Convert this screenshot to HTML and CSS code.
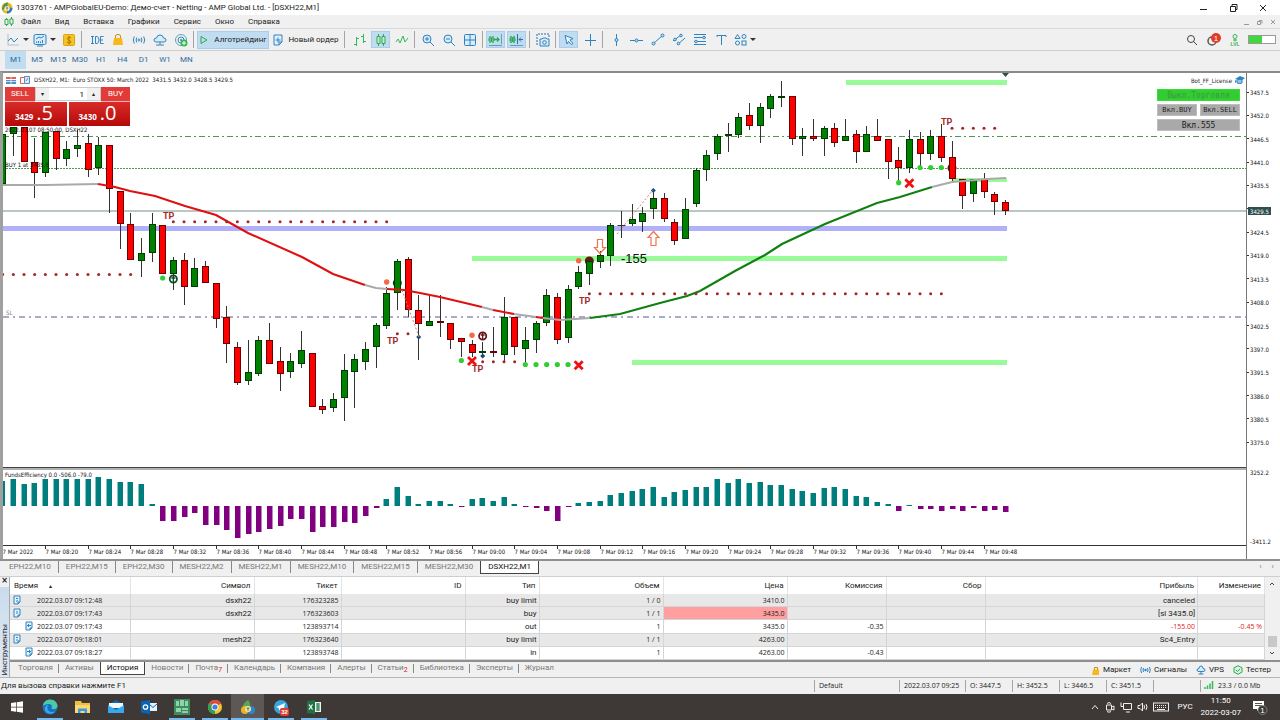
FILE: index.html
```html
<!DOCTYPE html>
<html lang="ru">
<head>
<meta charset="utf-8">
<title>1303761 - AMPGlobalEU-Demo</title>
<link rel="stylesheet" href="styles.css">
</head>
<body>
<header class="titlebar">
  <svg class="app-logo" width="12" height="12" viewBox="0 0 12 12"><circle cx="6" cy="6" r="5.5" fill="#e9b824"/><path d="M1 8C1 3 4 .5 7 .6L6 6z" fill="#4a9a4c"/><path d="M6 11.500A5.500 5.500 0 0 0 11.500 6L6 5z" fill="#2c7fc4"/><circle cx="6" cy="6.500" r="2.600" fill="#fff4c2"/><path d="M6 4.500v4M4.800 6h2.400" stroke="#866" stroke-width=".8"/></svg>
  <h1>1303761 - AMPGlobalEU-Demo: Демо-счет - Netting - AMP Global Ltd. - [DSXH22,M1]</h1>
  <div class="winctl">
    <button aria-label="Свернуть"><svg width="10" height="10"><path d="M2 6.500h7" stroke="#222"/></svg></button>
    <button aria-label="Развернуть"><svg width="10" height="10"><path d="M2.500 3.500h5v5h-5zM4 3V1.500h5v5H8" fill="none" stroke="#222"/></svg></button>
    <button aria-label="Закрыть"><svg width="10" height="10"><path d="M2 2l6 6M8 2l-6 6" stroke="#222"/></svg></button>
  </div>
</header>
<nav class="menubar">
  <svg width="10" height="10"><path d="M2.500 1v8M7.500 0v9" stroke="#2cab4f"/><path d="M1 2.500h3v5H1zM6 2h3v5H6z" fill="#f0f0f0" stroke="#2cab4f"/></svg>
  <button>Файл</button><button>Вид</button><button>Вставка</button><button>Графики</button><button>Сервис</button><button>Окно</button><button>Справка</button>
  <div class="mdictl">
    <svg width="8" height="8"><path d="M1 6.500h5" stroke="#999"/></svg>
    <svg width="8" height="8"><path d="M1.500 3.500h3v3h-3zM3 2.500h3v3" fill="none" stroke="#999"/></svg>
    <svg width="8" height="8"><path d="M2 2l4 4M6 2l-4 4" stroke="#999"/></svg>
  </div>
</nav>
<div class="toolbar">
  <button class="ib drop" aria-label="Новый график"><svg width="14" height="14"><path d="M2 1v11h11" fill="none" stroke="#a9bfd0"/><path d="M2 8l3-3 3 4 4-4" fill="none" stroke="#2f83c0"/></svg></button>
  <button class="ib drop" aria-label="Шаблоны"><svg width="14" height="14"><rect x="1" y="1.500" width="12" height="10" rx="1.500" fill="#d8ebf8" stroke="#2f83c0"/><path d="M3 6l3-2 2 1 3-2M3.500 10V8.500M5.500 10V8M7.500 10V8.500M9.500 10V7" fill="none" stroke="#2f83c0"/><path d="M4 13h6" stroke="#2f83c0"/></svg></button>
  <button class="ib" aria-label="Символы"><svg width="12" height="12"><rect x=".5" y=".5" width="11" height="11" rx="1" fill="#f7c324" stroke="#dba512"/><path d="M8 4C6 2.500 4 3.500 4.500 5S8 6.500 8 8 5.500 9.500 4 8M6 2v8.500" fill="none" stroke="#946a00" stroke-width=".8"/></svg></button>
  <i class="sep"></i><i class="pad"></i>
  <button class="ib" aria-label="IDE"><svg width="14" height="12"><path d="M1 2.500h3M2.500 2.500v7M1 9.500h3M5.500 2.500v7h1.500q2-.5 2-3.500t-2-3.500zM13.500 2.500h-3v7h3M10.500 6h2.500" fill="none" stroke="#2f83c0"/></svg></button>
  <button class="ib" aria-label="Маркет"><svg width="12" height="13"><path d="M3.500 6V3q0-1.500 2.500-1.500T8.500 3v3" fill="none" stroke="#c98e10"/><path d="M2 5h8l1 7H1z" fill="#f7b81e"/></svg></button>
  <button class="ib" aria-label="Сигналы"><svg width="14" height="12"><circle cx="7" cy="6" r="1" fill="none" stroke="#2f83c0"/><path d="M4.800 3.500q-1.500 2.500 0 5M9.200 3.500q1.500 2.500 0 5M2.300 2.500q-2 3.500 0 7M11.700 2.500q2 3.500 0 7" fill="none" stroke="#2f83c0"/></svg></button>
  <button class="ib" aria-label="VPS"><svg width="14" height="14"><path d="M4 9H3Q1 9 1 7t2.500-2Q4 2 7 2t3.500 3Q13 5 13 7t-2 2H4M7 9v3M3 12h8" fill="#d8ebf8" stroke="#2f83c0"/></svg></button>
  <button class="ib" aria-label="Сеть"><svg width="14" height="14"><circle cx="7" cy="7" r="5.500" fill="none" stroke="#5aa7b8"/><circle cx="7" cy="7" r="3" fill="none" stroke="#2f83c0"/><circle cx="7" cy="7" r="1" fill="#2f83c0"/><circle cx="10" cy="10" r="3.500" fill="#35b855"/><path d="M10 8v4M8 10h4" stroke="#fff"/></svg></button>
  <i class="sep"></i>
  <button class="wide on algo"><svg width="10" height="10"><path d="M2 1.500l6 3.500-6 3.500z" fill="none" stroke="#2cab4f"/></svg>Алготрейдинг</button>
  <button class="wide neworder"><svg width="10" height="12"><path d="M1 1h8v7l-3 3H1z" fill="#e4f1fa" stroke="#2f83c0"/><path d="M5 3.500v5M2.500 6h5M9 8H6v3" fill="none" stroke="#2f83c0"/></svg>Новый ордер</button>
  <i class="sep"></i><i class="pad"></i>
  <button class="ib" aria-label="Бары"><svg width="14" height="12"><path d="M3.500 3v9M1 10.500h2.500M3.500 4.500H6M10.500 0v9M8 2.500h2.500M10.500 7.500H13" stroke="#35b855"/></svg></button>
  <button class="ib on" aria-label="Свечи"><svg width="12" height="12"><path d="M3.500 0v12M8.500 0v12" stroke="#2cab4f"/><path d="M2 2.500h3v7H2zM7 2.500h3v7H7z" fill="#cfe6da" stroke="#2cab4f"/></svg></button>
  <button class="ib" aria-label="Линия"><svg width="14" height="12"><path d="M1 8l2-3 2 4 3-7 2 6 3-4" fill="none" stroke="#35b855"/></svg></button>
  <i class="sep"></i>
  <button class="ib" aria-label="Приблизить"><svg width="14" height="14"><circle cx="6" cy="6" r="4" fill="#d8ebf8" stroke="#2f83c0"/><path d="M9 9l4 4M4 6h4M6 4v4" stroke="#2f83c0"/></svg></button>
  <button class="ib" aria-label="Отдалить"><svg width="14" height="14"><circle cx="6" cy="6" r="4" fill="#d8ebf8" stroke="#2f83c0"/><path d="M9 9l4 4M4 6h4" stroke="#2f83c0"/></svg></button>
  <button class="ib" aria-label="Плитка"><svg width="12" height="12"><rect x=".5" y=".5" width="11" height="11" rx="1" fill="#d8ebf8" stroke="#2f83c0"/><path d="M6 1v10M1 6h10" stroke="#2f83c0"/></svg></button>
  <i class="sep"></i>
  <button class="ib on" aria-label="Автопрокрутка"><svg width="15" height="14"><path d="M2 3v7M5 3v7M6 6.500h5M9 4.500l2 2-2 2" fill="none" stroke="#2cab4f" stroke-width="1.300"/><path d="M1 5v3M3.500 4v5M6 5v3" stroke="#2cab4f"/><path d="M13.500 1v10M1 12.500h13" stroke="#6d9cbb"/></svg></button>
  <button class="ib on" aria-label="Сдвиг графика"><svg width="15" height="14"><path d="M2 3v7M5 3v7" stroke="#2cab4f" stroke-width="1.500"/><path d="M1 5v3M3.500 4v5M6 5v3" stroke="#2cab4f"/><path d="M8.500 1v10M14 6.500h-4M12 4.500l-2 2 2 2" fill="none" stroke="#2f70a8"/><path d="M1 12.500h13" stroke="#6d9cbb"/></svg></button>
  <i class="sep"></i>
  <button class="ib" aria-label="Снимок"><svg width="14" height="14"><path d="M1 12V1h12v4" fill="none" stroke="#2f70a8" stroke-dasharray="2 1"/><path d="M4 6h2l1-1h3l1 1h2v7H4z" fill="#d8ebf8" stroke="#2f83c0"/><circle cx="8.500" cy="9.500" r="1.800" fill="none" stroke="#2f83c0"/></svg></button>
  <i class="sep grip"></i>
  <button class="ib on" aria-label="Курсор"><svg width="12" height="12"><path d="M2 1.500l8 3-3 1.500 3 3.500-1.500 1.200L5.500 7.500 4 10z" fill="#e8f3fb" stroke="#2f83c0"/></svg></button>
  <button class="ib" aria-label="Перекрестие"><svg width="12" height="12"><path d="M6.500 0v12M1 6.500h11" stroke="#2f83c0"/></svg></button>
  <i class="sep"></i>
  <button class="ib" aria-label="Вертикальная линия"><svg width="12" height="12"><path d="M6.500 0v12" stroke="#2f83c0"/><circle cx="6.500" cy="6" r="1.500" fill="#bcdcf2" stroke="#2f83c0"/></svg></button>
  <button class="ib" aria-label="Горизонтальная линия"><svg width="13" height="12"><path d="M0 6.500h13" stroke="#2f83c0"/><circle cx="6.500" cy="6.500" r="1.500" fill="#bcdcf2" stroke="#2f83c0"/></svg></button>
  <button class="ib" aria-label="Трендовая линия"><svg width="14" height="13"><path d="M2 11L12 2" stroke="#2f83c0"/><circle cx="2.500" cy="10.500" r="1.500" fill="#bcdcf2" stroke="#2f83c0"/><circle cx="11.500" cy="2.500" r="1.500" fill="#bcdcf2" stroke="#2f83c0"/></svg></button>
  <button class="ib" aria-label="Канал"><svg width="14" height="13"><path d="M1 8l8-6M5 12l8-7" stroke="#2f83c0"/><circle cx="3" cy="6.500" r="1.300" fill="#bcdcf2" stroke="#2f83c0"/><circle cx="9" cy="2.500" r="1.300" fill="#bcdcf2" stroke="#2f83c0"/><circle cx="6.500" cy="10.500" r="1.300" fill="#bcdcf2" stroke="#2f83c0"/></svg></button>
  <button class="ib" aria-label="Фибоначчи"><svg width="14" height="13"><path d="M1 1.500h12M1 4.500h12M1 8.500h12M1 11.500h12" stroke="#2f83c0"/><circle cx="11" cy="4.500" r="1.300" fill="#bcdcf2" stroke="#2f83c0"/><circle cx="3" cy="8.500" r="1.300" fill="#bcdcf2" stroke="#2f83c0"/></svg></button>
  <button class="ib" aria-label="Текст"><svg width="12" height="12"><path d="M2 3V1.500h9V3M6.500 1.500V11" fill="none" stroke="#2f83c0"/></svg></button>
  <button class="ib drop" aria-label="Объекты"><svg width="13" height="13"><path d="M3.500 1.500l2.500 4H1z" fill="none" stroke="#2f83c0"/><circle cx="10" cy="3.500" r="2" fill="none" stroke="#2f83c0"/><circle cx="3.500" cy="10" r="2" fill="none" stroke="#2f83c0"/><rect x="8" y="8" width="4" height="4" fill="none" stroke="#2f83c0"/></svg></button>
  <div class="tbright">
    <button aria-label="Поиск"><svg width="12" height="12"><circle cx="5" cy="5" r="3.500" fill="none" stroke="#444"/><path d="M7.500 7.500L11 11" stroke="#444"/></svg></button>
    <button aria-label="Уведомления"><svg width="16" height="14"><circle cx="6" cy="8" r="4" fill="none" stroke="#555" stroke-width="1.500"/><circle cx="10" cy="5" r="5" fill="#e33b25"/><text x="10" y="8" class="badge" text-anchor="middle">1</text></svg></button>
    <button aria-label="Уровень"><svg width="10" height="14"><circle cx="5" cy="3.500" r="2" fill="none" stroke="#35b855"/><path d="M5 5.500v3M3 7h4" stroke="#35b855"/><text x="5" y="13" class="lvl" text-anchor="middle">LVL</text></svg></button>
    <span class="meter"><span></span></span>
  </div>
</div>
<div class="framebar"><div class="frames">
  <button class="on">M1</button><button>M5</button><button>M15</button><button>M30</button><button>H1</button><button>H4</button><button>D1</button><button>W1</button><button>MN</button>
</div></div>

<main class="chart">
  <div class="plot">
    <svg id="plot" width="100%" height="100%" role="img" aria-label="График DSXH22, M1"></svg>
    <div class="chart-title">
      <svg width="10" height="9"><path d="M0 1h10v2H0z" fill="#e06050"/><path d="M0 4h10v4H0z" fill="#4f8fc8"/><path d="M5 0v9M0 5.500h10" stroke="#fff" stroke-width=".7"/></svg>
      <svg width="10" height="9"><path d="M.5 1.500h4v6h-4z" fill="#fff" stroke="#e06050"/><path d="M4.500 .5h5v7h-5z" fill="#d8ebf8" stroke="#4f8fc8"/><path d="M6 5l2-3" stroke="#e06050"/></svg>
      <span>DSXH22, M1:&nbsp; Euro STOXX 50: March 2022&nbsp; 3431.5 3432.0 3428.5 3429.5</span>
    </div>
    <form class="oneclick">
      <button type="button" class="side">SELL</button>
      <div class="volume"><button type="button" aria-label="Меньше">▾</button><input value="1" aria-label="Объем"><button type="button" aria-label="Больше">▴</button></div>
      <button type="button" class="side">BUY</button>
      <div class="quotes"><button type="button"><small>3429</small> .<b>5</b></button><button type="button"><small>3430</small> .<b>0</b></button></div>
    </form>
    <div class="bot">
      <div class="botname">Bot_FF_License <svg width="10" height="8"><path d="M0 3l5-3 5 2-4 3z" fill="#2f83c0"/><path d="M2 4v3q3 1 5 0V4M1 4l-1 3" fill="#8cc4ea" stroke="#2f83c0"/></svg></div>
      <button class="go">Выкл.Торговля</button>
      <button class="half">Вкл.BUY</button><button class="half">Вкл.SELL</button>
      <button class="long">Вкл.555</button>
    </div>
  </div>
  <svg id="axis" width="33" height="100%" role="img" aria-label="Шкала цен"></svg>
</main>

<nav class="charttabs">
  <button>EPH22,M10</button><button>EPH22,M15</button><button>EPH22,M30</button><button>MESH22,M2</button><button>MESH22,M1</button><button>MESH22,M10</button><button>MESH22,M15</button><button>MESH22,M30</button><button class="on">DSXH22,M1</button>
  <span class="arrows"><span>‹</span><span>›</span></span>
</nav>

<section class="toolbox">
  <aside><button aria-label="Закрыть панель">×</button><span>Инструменты</span></aside>
  <div class="tbmain">
    <div class="history">
      <table>
        <colgroup><col class="c1"><col class="c2"><col class="c3"><col class="c2"><col class="c4"><col class="c2"><col class="c2"><col class="c5"><col class="c5"><col><col class="c6"></colgroup>
        <thead><tr><th class="first">Время <i>▴</i></th><th>Символ</th><th>Тикет</th><th>ID</th><th>Тип</th><th>Объем</th><th>Цена</th><th>Комиссия</th><th>Сбор</th><th>Прибыль</th><th>Изменение</th></tr></thead>
        <tbody>
          <tr class="order"><td class="time"><svg width="8" height="10"><path d="M1 1h6v6L5 9H1z" fill="#e4f1fa" stroke="#2f83c0"/><path d="M3 3.500h2M3 6h2M7 7H5v2" fill="none" stroke="#2f83c0"/></svg>2022.03.07 09:12:48</td><td class="w">dsxh22</td><td>176323285</td><td></td><td class="w">buy limit</td><td>1 / 0</td><td>3410.0</td><td></td><td></td><td class="w">canceled</td><td></td></tr>
          <tr class="order"><td class="time"><svg width="8" height="10"><path d="M1 1h6v6L5 9H1z" fill="#e4f1fa" stroke="#2f83c0"/><path d="M4 3v3M7 7H5v2" fill="none" stroke="#2f83c0"/></svg>2022.03.07 09:17:43</td><td class="w">dsxh22</td><td>176323603</td><td></td><td class="w">buy</td><td>1 / 1</td><td class="hit">3435.0</td><td></td><td></td><td class="w">[sl 3435.0]</td><td></td></tr>
          <tr><td class="time deal"><svg width="8" height="10"><path d="M1 1h6v6L5 9H1z" fill="#e4f1fa" stroke="#2f83c0"/><path d="M2 4.500h4M4 3L2.500 4.500 4 6M7 7H5v2" fill="none" stroke="#2f83c0"/></svg>2022.03.07 09:17:43</td><td></td><td>123893714</td><td></td><td class="w">out</td><td>1</td><td>3435.0</td><td>-0.35</td><td></td><td class="neg">-155.00</td><td class="neg">-0.45 %</td></tr>
          <tr class="order"><td class="time"><svg width="8" height="10"><path d="M1 1h6v6L5 9H1z" fill="#e4f1fa" stroke="#2f83c0"/><path d="M3 3.500h2M3 6h2M7 7H5v2" fill="none" stroke="#2f83c0"/></svg>2022.03.07 09:18:01</td><td class="w">mesh22</td><td>176323640</td><td></td><td class="w">buy limit</td><td>1 / 1</td><td>4263.00</td><td></td><td></td><td class="w">Sc4_Entry</td><td></td></tr>
          <tr><td class="time deal"><svg width="8" height="10"><path d="M1 1h6v6L5 9H1z" fill="#e4f1fa" stroke="#2f83c0"/><path d="M2 4.500h4M4 3l1.500 1.500L4 6M7 7H5v2" fill="none" stroke="#2f83c0"/></svg>2022.03.07 09:18:27</td><td></td><td>123893748</td><td></td><td class="w">in</td><td>1</td><td>4263.00</td><td>-0.43</td><td></td><td></td><td></td></tr>
        </tbody>
      </table>
      <div class="scroll"><svg width="6" height="6"><path d="M1 4l2-2 2 2" fill="none" stroke="#444"/></svg><span></span><svg width="6" height="6"><path d="M1 2l2 2 2-2" fill="none" stroke="#444"/></svg></div>
    </div>
    <nav class="tooltabs">
      <button>Торговля</button><button class="nb">Активы</button><button class="on">История</button><button>Новости</button><button>Почта<sub>7</sub></button><button>Календарь</button><button>Компания</button><button>Алерты</button><button>Статьи<sub>2</sub></button><button>Библиотека</button><button>Эксперты</button><button class="nb">Журнал</button>
      <div class="links">
        <a href="#"><svg width="8" height="9"><path d="M2.500 4V1.500h3V4" fill="none" stroke="#c98e10"/><path d="M1 3.500h6V9H0z" fill="#f7b81e"/></svg>Маркет</a>
        <a href="#"><svg width="11" height="8"><circle cx="5.500" cy="4" r="1.200" fill="#2f83c0"/><path d="M3.500 2q-1 2 0 4M7.500 2q1 2 0 4M1.500 1q-1.500 3 0 6M9.500 1q1.500 3 0 6" fill="none" stroke="#2f83c0"/></svg>Сигналы</a>
        <a href="#"><svg width="10" height="10"><path d="M3 6.500Q1 6.500 1 5t2-1.500Q3 1 5 1t2 2.500Q9 3.500 9 5T7 6.500zM5 6.500v2.500M2.500 9h5" fill="#d8ebf8" stroke="#2f83c0"/></svg>VPS</a>
        <a href="#"><svg width="10" height="10"><path d="M5 .7l4 2.100v4.400L5 9.300 1 7.200V2.800z" fill="#d9f2df" stroke="#2cab4f"/><path d="M3 5l1.500 1.500L7 4" fill="none" stroke="#2cab4f"/></svg>Тестер</a>
      </div>
    </nav>
  </div>
</section>

<footer class="status">
  <span class="help">Для вызова справки нажмите F1</span>
  <span class="s85">Default</span><span class="s66">2022.03.07 09:25</span><span class="s47">O: 3447.5</span><span class="s47">H: 3452.5</span><span class="s47">L: 3446.5</span><span class="s47">C: 3451.5</span><span class="s47"></span>
  <span class="net"><svg width="10" height="9"><path d="M1 9V7M3.500 9V5.500M6 9V3.500M8.500 9V1" stroke="#35b855" stroke-width="1.500"/></svg>23.3 / 0.0 Mb</span>
</footer>

<footer class="taskbar">
  <button aria-label="Пуск"><svg width="12" height="12"><path d="M0 2l5-.7V5.700H0zM5.700 1.200L12 .3v5.400H5.700zM0 6.400h5v4.300L0 10zM5.700 6.400H12v5.300l-6.300-.9z" fill="#fff"/></svg></button>
  <button class="run" aria-label="Edge"><svg width="16" height="16"><circle cx="8" cy="8" r="7.500" fill="#1273c4"/><path d="M.8 7C1.500 2.500 5 .5 8 .5c5 0 7.500 3.500 7.500 6.500 0 2.500-2.500 3.500-5 3-1-.3-1.200-.8-.7-1.500C10.500 6.500 9 5 6.800 5 4 5 1.800 6 .8 7z" fill="#4cc9a5"/><path d="M5.500 8c-.5 4 3 6 7.500 4.500-2 3-8 3.500-10-1C2 8.500 4 6 6.500 6c-.8.500-1 1.200-1 2z" fill="#3ba5e8"/></svg></button>
  <button aria-label="Проводник"><svg width="15" height="14"><path d="M0 1h6l1 2h8v10H0z" fill="#f3bd3e"/><path d="M0 5h15v8H0z" fill="#fbd873"/><path d="M3 13V8.500h9V13h-2.500v-2h-4v2z" fill="#3c9be0"/></svg></button>
  <button aria-label="Почта"><svg width="16" height="14"><path d="M0 5l8-5 8 5v8H0z" fill="#1668b5"/><path d="M1 3h14v5H1z" fill="#f4f8fc"/><path d="M0 5l8 5 8-5v8H0z" fill="#38a8ee"/></svg></button>
  <button aria-label="Outlook"><svg width="16" height="14"><path d="M8 3h8v8H8z" fill="#e5f1fb"/><path d="M8 4l4 3.500L16 4" fill="none" stroke="#1268b5"/><path d="M0 1.500L9 0v14l-9-1.500z" fill="#0a64b4"/><circle cx="4.500" cy="7" r="2.200" fill="none" stroke="#fff" stroke-width="1.300"/></svg></button>
  <button class="run" aria-label="Портфель"><svg width="16" height="16"><path d="M0 0h16v16H0z" fill="#3c8c5e"/><path d="M2 2h3v5H2zM6 1h4v6H6zM11 2h3v5h-3zM2 9h5v4H2zM8 9h6v2H8z" fill="#8fd3a8"/><path d="M8 13h6" stroke="#fff"/></svg></button>
  <button class="run" aria-label="Chrome"><svg width="16" height="16"><circle cx="8" cy="8" r="7" fill="#f4c52a"/><path d="M8 8L1.900 4.500A7 7 0 0 1 14.100 4.500z" fill="#dd4b3a"/><path d="M8 8L1.900 4.500A7 7 0 0 0 8 15z" fill="#2f9e57"/><circle cx="8" cy="8" r="3.500" fill="#fff"/><circle cx="8" cy="8" r="2.600" fill="#3f7fe6"/></svg></button>
  <button class="run cur" aria-label="MetaTrader"><svg width="15" height="16"><path d="M3 10Q2 4 8 1q3 3 2 7z" fill="#57a657"/><circle cx="5" cy="11" r="4" fill="#e5b525"/><circle cx="11" cy="11" r="4" fill="#2d86c9"/><circle cx="8" cy="10" r="3" fill="#f6e6a0"/><path d="M8 8v4M6.500 9.500h3" stroke="#777"/></svg></button>
  <button class="run" aria-label="Telegram"><svg width="16" height="17"><circle cx="8" cy="8" r="7" fill="#38a5df"/><path d="M3 8l9-4-1.500 8-3-2-1.500 1.500L5.800 9z" fill="#fff"/><rect x="7" y="9" width="9" height="8" rx="2" fill="#e23a30"/><text x="11.500" y="15" class="tgb" text-anchor="middle">32</text></svg></button>
  <button class="run" aria-label="Excel"><svg width="14" height="14"><path d="M7 2h7v10H7z" fill="#e8f5ec"/><path d="M9 4h4M9 6h4M9 8h4M9 10h4M11 3v8" stroke="#1f7244"/><path d="M0 1l8-1v14l-8-1z" fill="#1f7244"/><path d="M2 4.500l3.500 5M5.500 4.500L2 9.500" stroke="#fff" stroke-width="1.200"/></svg></button>
  <div class="tray">
    <svg width="10" height="10"><path d="M2 7l3-3.500L8 7" fill="none" stroke="#eee"/></svg>
    <svg width="10" height="12"><path d="M1.500 4h5v5h-5zM6.500 6l2.500-1v4L6.500 8M2 2.500q2-2 4 0M2 10.500q2 1.500 4 0" fill="none" stroke="#eee"/></svg>
    <svg width="12" height="12"><path d="M3.500 2.500h8v6h-8zM6 11h4M1 1.500v4M1 5.500h2" fill="none" stroke="#eee"/></svg>
    <svg width="11" height="12"><path d="M1 4.500h2L5.500 2v8L3 7.500H1zM7 4q1 2 0 4M9 3q2 3 0 6" fill="none" stroke="#eee"/></svg>
    <svg width="16" height="10"><rect x=".5" y="1" width="15" height="8" fill="none" stroke="#eee"/><path d="M2 3.500h12M2 5.500h12" stroke="#eee" stroke-dasharray="1 1"/><path d="M4 7.500h8" stroke="#eee"/></svg>
    <span class="lang">РУС</span>
    <span class="clock">11:50<br>2022-03-07</span>
    <svg width="16" height="17"><path d="M1 2h11v8H7l-2 2v-2H1z" fill="#fff"/><path d="M3 4.500h7M3 6.500h7" stroke="#555"/><circle cx="10.500" cy="11" r="4.500" fill="#3e3837" stroke="#999" stroke-width=".7"/><text x="10.500" y="14" class="ntf" text-anchor="middle">1</text></svg>
  </div>
</footer>
<script src="chart.js"></script>
</body>
</html>
```

FILE: styles.css
```css
*{box-sizing:border-box}
html,body{margin:0;height:100%}
body{display:flex;flex-direction:column;min-height:100vh;overflow:hidden;background:#f0f0f0;color:#1c1c1c;font:8px/12px Roboto,"Open Sans",sans-serif}
button{font:inherit;color:inherit;background:none;border:0;padding:0;margin:0;display:flex;align-items:center;justify-content:center;white-space:nowrap}
svg{display:block;flex:none}
h1{font:inherit;margin:0}

.titlebar{display:flex;align-items:center;gap:3px;height:15px;padding-left:1px;background:#fff;flex:none}
.winctl{margin-left:auto;display:flex;gap:20px;padding-right:12px}
.menubar{display:flex;align-items:center;gap:14px;height:14px;padding-left:4px;flex:none;border-bottom:1px solid #d9d9d9}
.menubar > svg{margin-right:-7px}
.mdictl{margin-left:auto;display:flex;gap:5px;padding-right:3px}

.toolbar{display:flex;align-items:center;gap:2px;height:22px;padding-left:5px;flex:none;border-bottom:1px solid #cfcfcf;color:#222}
.ib{width:19px;height:17px;flex:none}
.drop{width:25px;gap:3px}
.drop::after{content:"";border:3px solid transparent;border-top-color:#333;border-bottom:0}
.on{background:#bfdcf1}
.toolbar .on{border:1px solid #a9cdea}
.sep{width:1px;height:17px;margin:0 1px;background:#a5a5a5;flex:none}
.pad{width:0}
.wide{height:18px;gap:5px}
.algo{width:72px}
.neworder{width:70px}
.tbright{margin-left:auto;display:flex;align-items:center;gap:8px;padding-right:4px}
.meter{width:28px;height:9px;border:1px solid #999;background:#fff}
.meter span{display:block;width:50%;height:100%;background:#3fd83f}
.badge{font:8px "Liberation Sans",sans-serif;fill:#fff}
.lvl{font:bold 5px "Liberation Sans",sans-serif;fill:#35b855}

.framebar{height:20px;flex:none;padding:0 5px}
.frames{display:flex;width:192px;height:18px;color:#2b6c9e}
.frames button{flex:1 0 0;min-width:0}

.chart{flex:1;min-height:0;display:flex;background:#fff;border-top:2px solid #8a8a8a;border-left:3px solid #a0a0a0;overflow:hidden}
.plot{position:relative;flex:1;min-width:0;border-right:1px solid #777}
#plot,#axis{font:6px "DejaVu Sans Condensed","DejaVu Sans",sans-serif;fill:#111}
#plot .tp{font:bold 9px Roboto,sans-serif;fill:#a52a2a}
#plot .pnl{font:13px "Liberation Sans",sans-serif}
.dim{fill:#777}
.now{fill:#fff}

.chart-title{position:absolute;left:3px;top:1px;display:flex;align-items:center;gap:4px;font:6px/12px "DejaVu Sans Condensed",sans-serif}
.oneclick{position:absolute;left:2px;top:14px;width:125px;display:grid;grid-template-columns:30px 1fr 29px;color:#fff}
.side{height:15px;background:#e23c3a;border-bottom:1px solid #f6b0b0}
.volume{display:flex;height:14px;background:#fff;color:#222;border:1px solid #ccc}
.volume button{width:13px;background:#f0f0f0;font-size:6px}
.volume input{flex:1;min-width:0;width:0;border:0;padding:0 3px;text-align:right;font:8px Roboto,sans-serif}
.quotes{grid-column:1/-1;display:grid;grid-template-columns:1fr 1fr;gap:2px}
.quotes button{height:24px;background:linear-gradient(#d82c2a,#b50808);font:20px/22px "Open Sans",sans-serif;align-items:baseline;justify-content:flex-start;padding-left:10px;gap:3px}
.quotes small{font:bold 8px/22px "Open Sans",sans-serif}
.quotes b{font-weight:normal;margin-left:-3px}
.bot{position:absolute;right:6px;top:1px;width:83px;display:grid;grid-template-columns:40px 40px;gap:3px;font:7px/9px "DejaVu Sans Mono",monospace}
.botname{grid-column:1/-1;display:flex;justify-content:flex-end;gap:3px;margin-right:-5px;height:12px;align-items:center;font:6px/11px "DejaVu Sans Condensed",sans-serif}
.bot button{height:12px;background:#a9a9a9;border:1px solid #bdbdbd}
.bot .go,.bot .long{grid-column:1/-1;font-size:8px}
.bot .go{background:#32cd32;border-color:#32e032;color:#3c9a3c}

.charttabs{display:flex;align-items:flex-start;height:17px;flex:none;padding-left:2px;border-top:2px solid #8f8f8f;color:#777}
.charttabs button{height:12px;padding:0 7px;border-right:1px solid #888}
.charttabs button.on{height:13px;background:#fff;color:#111;border:1px solid #444;border-top:0}
.charttabs button:nth-last-of-type(2){border-right:0}
.arrows{margin-left:auto;display:flex;gap:10px;padding-right:6px}

.toolbox{display:flex;height:101px;flex:none;border-top:1px solid #cfcfcf}
.toolbox aside{width:10px;flex:none;display:flex;flex-direction:column;align-items:center;justify-content:space-between;background:linear-gradient(#f0f0f0 10px,#c9dcee 10px,#dfe9f3);border-right:1px solid #a9a9a9}
.toolbox aside button{font:bold 8px/8px "DejaVu Sans",sans-serif;height:8px}
.toolbox aside span{writing-mode:vertical-rl;transform:rotate(180deg);line-height:9px;padding-top:2px}
.tbmain{flex:1;min-width:0;display:flex;flex-direction:column}
.history{display:flex;height:85px;background:#fff;border-bottom:2px solid #8f8f8f}
.history table{flex:1;width:0;height:83px;border-collapse:collapse;table-layout:fixed;font:7px/11px "Open Sans",sans-serif}
.c1{width:120px}.c2{width:124px}.c3{width:87px}.c4{width:74px}.c5{width:99px}.c6{width:67px}
th{font:8px/11px Roboto,sans-serif;text-align:right;padding:0 3px;height:17px;border-right:1px solid #e3e3e3}
th.first{text-align:left;padding-left:4px}
th i{font:6px/11px "DejaVu Sans",sans-serif;margin-left:9px}
td{text-align:right;padding:0 2px;border-right:1px solid #d5d5d5;border-bottom:1px solid #d5d5d5;white-space:nowrap}
td.w{font:8px/11px Roboto,sans-serif}
td.time{text-align:left}
td.time svg{float:left;margin:0 16px 0 1px}
td.deal svg{margin:0 4px 0 13px}
.order{background:#e8e8e8}
td.hit{background:#ff9f9f}
.neg{color:#e02020}
.scroll{width:15px;flex:none;background:#f0f0f0;display:flex;flex-direction:column;justify-content:space-between;padding:4px 3px 4px 2px;align-items:center}
.scroll span{width:9px;height:11px;margin-top:46px;background:#c8c8c8}
.tooltabs{display:flex;height:15px;align-items:flex-start;padding-left:2px;color:#777}
.tooltabs button{height:12px;padding:0 6px;position:relative}
.tooltabs button:not(.nb):not(.on)::after{content:"";position:absolute;right:0;top:2px;height:9px;border-right:1px solid #888}
.tooltabs button.on{height:13px;background:#fff;color:#111;border:1px solid #444;border-top:0}
.tooltabs sub{font-size:7px;color:#e02020;line-height:7px;align-self:flex-end}
.links{margin-left:auto;display:flex;gap:9px;padding:2px 9px 0 0}
.links a{display:flex;align-items:center;gap:3px;color:#222;text-decoration:none}

.status{display:flex;align-items:center;height:17px;flex:none;border-top:1px solid #b5b5b5;padding-left:1px;font:7px/12px "Open Sans",sans-serif}
.status span{height:12px;padding-left:4px;border-left:1px solid #a5a5a5;flex:none;white-space:nowrap}
.status .help{flex:1;padding:0;border:0;font:8px/12px Roboto,sans-serif}
.s85{width:85px}.s66{width:66px}.s47{width:47px}
.status .net{display:flex;gap:4px;width:80px;padding-left:3px}

.taskbar{display:flex;height:26px;flex:none;background:#3e3837;color:#fff}
.taskbar > button{width:33px;height:26px}
.taskbar .run{background:linear-gradient(#76b9ed,#76b9ed) center bottom/26px 2px no-repeat}
.taskbar .cur{background-color:#5d5756;background-size:100% 2px}
.tray{margin-left:auto;display:flex;align-items:center;gap:5px;padding-right:12px}
.lang{margin:0 3px}
.clock{text-align:center;margin-right:6px}
.tgb{font:bold 6px "Liberation Sans",sans-serif;fill:#fff}
.ntf{font:8px "Liberation Sans",sans-serif;fill:#fff}
```

FILE: chart.js
```js
const NS = 'http://www.w3.org/2000/svg';
const GREEN = '#008000', RED = '#ff0000';
const STEP = 32 / 3;
// Origin of the drawing space relative to the plot's own corner.
const OX = 3, OY = 73;
const X = i => 2.67 + i * STEP;

function add(parent, name, attrs, text) {
  const el = document.createElementNS(NS, name);
  for (const k in attrs) el.setAttribute(k, attrs[k]);
  if (text !== undefined) el.textContent = text;
  parent.appendChild(el);
  return el;
}
const plot = add(document.getElementById('plot'), 'g', { transform: `translate(${-OX},${-OY})` });
const line = (x1, y1, x2, y2, stroke, extra) => add(plot, 'line', { x1, y1, x2, y2, stroke, ...extra });
const rect = (x, y, width, height, fill, extra) => add(plot, 'rect', { x, y, width, height, fill, ...extra });

// Levels
rect(846, 80, 161, 5, '#98fb98');
rect(3, 226, 1004, 5, '#b0b0fb');
rect(472, 256, 535, 5, '#98fb98');
rect(632, 360, 375, 5, '#98fb98');
rect(952, 178, 55, 4, '#98fb98');
line(3, 136.5, '110%', 136.5, '#4f994f', { 'stroke-dasharray': '6 3 2 3' });
line(3, 168.5, '110%', 168.5, '#4f994f', { 'stroke-dasharray': '2 1' });
line(3, 211, '110%', 211, '#a3b5b2', { 'stroke-width': 1.5 });
line(3, 317, '110%', 317, '#8f8fbc', { 'stroke-dasharray': '6 4 2 4', 'stroke-width': 1.3 });

// Moving average, coloured by direction
const ma = [
  ['#aaa', '3,185 45,185 98,184'],
  ['#e01010', '98,184 115,187 130,191 155,196 185,206 216,215 248,233 302,257 333,274 365,285'],
  ['#aaa', '365,285 376,288 387,289'],
  ['#e01010', '387,289 404,290 420,293 440,297 482,307'],
  ['#aaa', '482,307 493,310'],
  ['#e01010', '493,310 514,314'],
  ['#aaa', '514,314 536,317'],
  ['#e01010', '536,317 543,318'],
  ['#aaa', '543,318 560,320 590,318'],
  ['#108010', '590,318 620,314 660,303 687,296 700,291 735,271 765,255 782,244 825,224 877,203 900,197 932,187'],
  ['#aaa', '932,187 952,182 987,179 1006,178']
];

// Bot badges: [bar, y, colour, has face]; the faceless ones lie behind the candles
const badges = [[16, 279, '#0b4d1e', 1], [37, 283, '#0b3d1e', 0], [45, 336, '#6a1414', 1], [55, 261, '#6a1414', 0], [89, 168, '#5a1010', 0]];
function badge([i, y, c, face]) {
  const x = X(i);
  if (!face) return add(plot, 'circle', { cx: x, cy: y, r: 4.5, fill: c });
  add(plot, 'circle', { cx: x, cy: y, r: 3.6, fill: '#fff', stroke: c, 'stroke-width': 1.8 });
  add(plot, 'path', { d: `M${x} ${y - 4}v8M${x - 2} ${y - 1}h4`, stroke: c, fill: 'none', 'stroke-width': 1.3 });
}
badges.filter(b => !b[3]).forEach(badge);

// up, body top, body bottom, high, low
const candles = [
[1,134,184],[1,127,134,127,156],[0,127,162],[0,162,173,138,198],[1,132,173,132,177],[0,131,159,131,170],[1,149,159,141,166],[1,145,149,130,157],[0,143,170,134,177],[1,145,168,137,175],
[0,145,189,145,213],[0,191,224,191,249],[0,224,260,213,260],[1,253,261,238,277],[1,224,253,213,262],[0,225,274],[1,260,274,257,290],[0,260,287,253,305],[1,268,287,258,287],[0,266,283,261,283],
[0,283,319,283,328],[0,317,344,306,363],[0,347,383,342,385],[1,372,381,340,385],[1,340,374,336,376],[0,340,364,323,364],[0,361,374,347,391],[1,361,372,353,378],[1,350,364,331,368],[0,353,407],
[0,406,410,399,414],[1,399,408,393,412],[1,370,398,354,421],[1,359,372,354,408],[1,349,362,342,370],[1,325,347,323,368],[1,293,326,287,329],[1,261,293,259,310],[0,259,310,257,317],[0,310,324,295,360],
[1,321,326,296,326],[0,321,323,295,337],[0,323,340,323,349],[0,338,342,338,357],[0,344,353,340,357],[1,351,353,342,357],[0,351,353,327,357],[1,317,355,297,362],[0,317,347,317,355],[1,340,349,327,362],
[1,323,340,321,353],[1,295,323,289,326],[0,297,340,293,344],[1,289,338,285,343],[1,272,287,266,289],[1,261,274,261,285],[1,255,262,251,268],[1,225,256,223,266],[1,225,225,211,238],[1,219,224,204,226],
[1,213,222,207,232],[1,198,209,192,219],[0,198,219,193,222],[0,222,241,219,245],[1,209,239,198,239],[1,170,204,168,207],[1,155,170,150,181],[1,136,154,134,160],[1,134,136,123,152],[1,117,135,113,138],
[0,115,126,103,130],[1,107,126,103,143],[1,96,109,94,118],[1,96,98,81,107],[0,96,139,96,145],[1,136,139,128,156],[0,136,139,119,141],[1,128,139,126,156],[0,128,143,123,147],[1,136,141,119,141],
[0,134,152,130,163],[1,134,152,126,152],[0,136,141,119,141],[0,139,162,139,179],[0,160,168,147,182],[1,139,168,130,173],[0,139,154,132,167],[1,136,154,130,160],[0,136,158,124,162],[0,157,179,141,183],
[0,179,196,179,209],[1,179,194,179,202],[0,179,192,173,198],[0,194,202,192,215],[0,202,211,200,215]
];
const xPix = i => Math.round(X(i) - 0.5) + 0.5;
candles.forEach(([up, top, bottom, high = top, low = bottom], i) => {
  const x = xPix(i);
  line(x, high, x, low, '#333');
  if (bottom > top)
    rect(x - 3, top + 0.5, 6, Math.max(1, bottom - top - 1), up ? GREEN : RED, { stroke: up ? '#003c00' : '#6a0000', 'stroke-width': 1 });
  else line(x - 4, top + 0.5, x + 4, top + 0.5, '#333');
});
ma.forEach(([stroke, points]) => add(plot, 'polyline', { points, stroke, fill: 'none', 'stroke-width': 2.1 }));

// Order labels
add(plot, 'text', { x: 5, y: 132 }, '2022.03.07 08:50:00, DSXH22');
add(plot, 'text', { x: 5, y: 167 }, 'BUY 1 at 3435.5');
add(plot, 'text', { x: 6, y: 315, class: 'dim' }, 'SL');

// Signals
const dots = (from, to, y, r, fill) => {
  for (let i = from; i <= to; i++) add(plot, 'circle', { cx: X(i), cy: y, r, fill });
};
const MAROON = '#a02828';
dots(0, 12, 274.5, 1.5, MAROON);
dots(16, 36, 221.7, 1.5, MAROON);
dots(37, 38, 333.7, 1.5, MAROON);
dots(45, 48, 361.7, 1.5, MAROON);
dots(55, 88, 293.7, 1.5, MAROON);
dots(89, 93, 128.3, 1.5, MAROON);
[[15, 15, 278], [43, 43, 360.5], [49, 53, 364.5], [84, 84, 182.7], [86, 88, 167.5]].forEach(([a, b, y]) => dots(a, b, y, 2.6, '#32cd32'));
[[36, 282], [44, 335.3], [54, 260.7]].forEach(([i, y]) => dots(i, i, y, 2.7, '#f4694c'));
[[163, 219], [387, 344], [472, 372], [579, 304], [941, 125]].forEach(([x, y]) => add(plot, 'text', { x, y, class: 'tp' }, 'TP'));
badges.filter(b => b[3]).forEach(badge);

[[39, 337], [45, 356], [61, 190.5]].forEach(([i, y]) => {
  const x = X(i);
  add(plot, 'path', { d: `M${x} ${y - 2.5}l2.500 2.500-2.500 2.500-2.500-2.500z`, fill: '#134a80' });
});
[[44, 361], [54, 365.3], [85, 183.3]].forEach(([i, y]) => {
  const x = X(i);
  add(plot, 'path', { d: `M${x - 4} ${y - 4}l8 8M${x + 4} ${y - 4}l-8 8`, stroke: '#f01010', 'stroke-width': 2.8 });
});
add(plot, 'path', { d: 'M597.500 239.500h5v8h3l-5.500 6-5.500-6h3z', fill: 'none', stroke: '#f2724f', 'stroke-width': 1.2 });
add(plot, 'path', { d: 'M651 245.500h5v-8h3l-5.500-6-5.500 6h3z', fill: 'none', stroke: '#f2724f', 'stroke-width': 1.2 });
line(617, 234, 653, 190, '#c8846c', { 'stroke-dasharray': '2 2' });
line(402, 290, 419, 337, '#c8846c', { 'stroke-dasharray': '2 2' });
add(plot, 'text', { x: 621, y: 263, class: 'pnl' }, '-155');
add(plot, 'path', { d: 'M1002 73h7l-3.500 4z', fill: '#2f4f4f' });

// FundsEfficiency pane
rect(3, 467, '110%', 1, '#444');
rect(3, 468, '110%', 2, '#b0b0b0');
add(plot, 'text', { x: 5, y: 477 }, 'FundsEfficiency 0.0 -506.0 -79.0');
const ends = [481,479,484,483,479,479,479,479,479,477,479,482,482,484,504,521,521,517,513,525,525,530,538,534,532,529,526,519,519,532,527,527,522,523,516,508,499,487,496,504,501,501,504,507,499,498,501,497,504,507,508,511,521,507,503,502,501,495,493,491,489,487,497,492,490,487,487,479,483,479,483,482,485,485,489,491,493,488,487,489,496,497,502,504,511,505,509,509,511,509,511,508,511,510,512];
ends.forEach((y, i) => {
  const x = xPix(i) - 2.5;
  rect(x, Math.min(y, 506), 5, Math.abs(506 - y), y < 506 ? '#007d7d' : '#800080');
  if (y < 506) rect(x - 1, y, 1, 506 - y, '#7fc4c4');
  else rect(x + 5, 506, 1, y - 506, '#c080c0');
});

// Time scale
rect(3, 545, '110%', 1, '#333');
for (let k = 0; k < 24; k++) {
  const x = xPix(k * 4), m = 16 + k * 4;
  line(x, 546, x, 549, '#333');
  const hh = String(8 + Math.floor(m / 60)).padStart(2, '0'), mm = String(m % 60).padStart(2, '0');
  add(plot, 'text', { x, y: 554 }, k ? `7 Mar ${hh}:${mm}` : '7 Mar 2022');
}

// Price scale
const axis = add(document.getElementById('axis'), 'g', { transform: `translate(0,${-OY})` });
for (let k = 0; k < 16; k++) {
  const y = 92.5 + k * 23.35;
  add(axis, 'rect', { x: 0, y: Math.round(y) - 1, width: 2, height: 1, fill: '#333' });
  if (k !== 5) add(axis, 'text', { x: 3, y: y + 2.5 }, (3457.5 - k * 5.5).toFixed(1));
}
add(axis, 'rect', { x: 1, y: 207, width: 23, height: 8, fill: '#2f4f4f' });
add(axis, 'text', { x: 3, y: 213.5, class: 'now' }, '3429.5');
add(axis, 'text', { x: 3, y: 475 }, '3252.2');
add(axis, 'text', { x: 3, y: 544 }, '-3411.2');
```
